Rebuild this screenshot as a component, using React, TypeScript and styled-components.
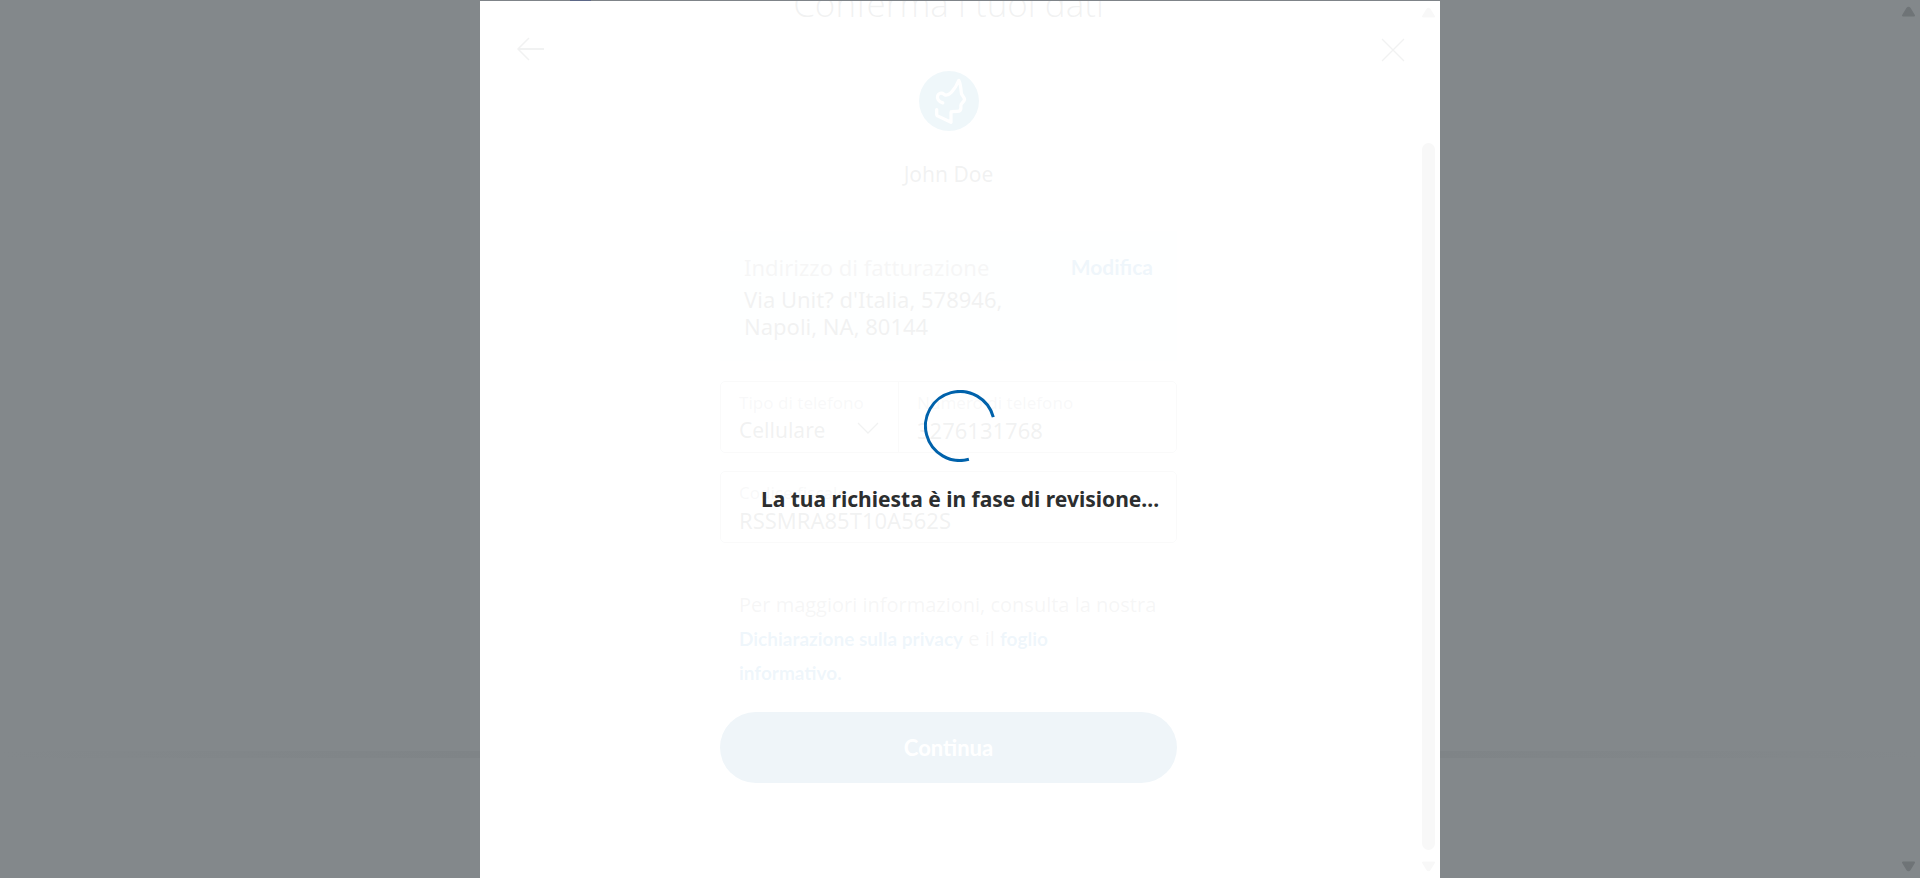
import React from 'react';
import styled, { createGlobalStyle } from 'styled-components';

const regular = '"Noto Sans", "Open Sans", sans-serif';
const strong = 'Lato, "Open Sans", sans-serif';

const GlobalStyle = createGlobalStyle`
  *, *::before, *::after { box-sizing: border-box; }
  body { margin: 0; background: #83888b; color: #2c2e2f; font-family: ${regular}; }
  h1, p { margin: 0; }
`;

const Backdrop = styled.div`
  display: grid;
  grid-template-columns: 1fr 2fr 1fr;
  grid-template-rows: 100%;
  height: 100vh;
  padding-top: 1px;
  overflow: hidden;
  background:
    linear-gradient(#5c6787, #5c6787) 30% top / 21px 1px no-repeat,
    linear-gradient(#7f8489, #7f8489) center top / 50% 1px no-repeat;
`;

const PageSide = styled.div<{ $side: 'left' | 'right' }>`
  display: flex;
  justify-content: flex-end;
  background: linear-gradient(to ${(p) => p.$side}, #7f8487, #83888b) left bottom 120px / 100% 7px no-repeat;
`;

const Modal = styled.main`
  position: relative;
  display: flex;
  min-width: 0;
  background: #ffffff;
`;

const Pane = styled.div`
  flex: 1;
  min-width: 0;
  overflow: hidden;
`;

const Scrollbar = styled.div`
  display: flex;
  flex-direction: column;
  align-items: center;
  width: 23px;
  padding: 6px 0;
`;

const PageScrollbar = styled(Scrollbar)`
  justify-content: space-between;
  padding-top: 5px;
`;

const ScrollArrow = styled.svg`
  flex: none;
  width: 15px;
  height: 11px;
`;

const ScrollGap = styled.div`
  flex: 125;
`;

const ScrollThumb = styled.div`
  flex: 707;
  width: 13px;
  margin-bottom: 11px;
  border-radius: 7px;
  background: #8b8b8b;
`;

const CornerButton = styled.button<{ $side: 'left' | 'right' }>`
  position: absolute;
  top: 32px;
  ${(p) => p.$side}: 31px;
  width: 36px;
  height: 34px;
  padding: 0;
  border: 0;
  background: none;
  color: #2c2e2f;
  svg { display: block; width: 36px; height: 34px; }
`;

const Form = styled.form`
  display: flex;
  flex-direction: column;
  width: 457px;
  max-width: 100%;
  margin: 0 auto;
`;

const Title = styled.h1`
  margin-top: -17px;
  font: 300 35px/40px "Open Sans", sans-serif;
  text-align: center;
  white-space: nowrap;
`;

const Avatar = styled.svg`
  width: 60px;
  height: 60px;
  margin: 47px auto 28px;
`;

const Name = styled.p`
  font-size: 21px;
  line-height: 30px;
  text-align: center;
`;

const AddressCard = styled.section`
  margin-top: 42px;
  padding: 21px 24px;
  background: #eaf4f2;
`;

const CardHead = styled.div`
  display: flex;
  justify-content: space-between;
  margin-bottom: 4px;
  font-size: 22px;
  line-height: 30px;
  color: #6c7378;
`;

const Address = styled.address`
  font-size: 22px;
  line-height: 27px;
  font-style: normal;
`;

const StrongLink = styled.a<{ $size: number }>`
  font: 700 ${(p) => p.$size}px/30px ${strong};
  color: #0070ba;
  text-decoration: none;
`;

const FieldRow = styled.div`
  display: flex;
  margin-top: 20px;
  border: 1px solid #a6acaf;
  border-radius: 5px;
  & + & { margin-top: 18px; }
`;

const Field = styled.div<{ $width?: string }>`
  position: relative;
  flex: ${(p) => (p.$width ? 'none' : '1')};
  width: ${(p) => p.$width ?? 'auto'};
  min-width: 0;
  padding: 9px 18px 7px;
  & + & { border-left: 1px solid #a6acaf; }
`;

const Label = styled.label`
  display: block;
  font-size: 17px;
  line-height: 24px;
  color: #8f9498;
`;

const Input = styled.input`
  display: block;
  width: 100%;
  height: 30px;
  padding: 0;
  border: 0;
  background: none;
  color: #2c2e2f;
  font: 22px/30px ${regular};
`;

const Select = styled.select`
  display: block;
  width: 100%;
  height: 30px;
  padding: 0;
  border: 0;
  appearance: none;
  background: none;
  color: #2c2e2f;
  font: 21px/30px ${regular};
`;

const Chevron = styled.svg`
  position: absolute;
  right: 19px;
  bottom: 18px;
  width: 22px;
  height: 12px;
  pointer-events: none;
`;

const Legal = styled.p`
  margin: 45px 0 22px;
  padding-left: 19px;
  font: 20px/34px "Open Sans", sans-serif;
  color: #6c7378;
`;

const Submit = styled.button`
  height: 71px;
  border: 0;
  border-radius: 36px;
  background: #00609c;
  color: #ffffff;
  font: 700 22px/30px ${strong};
`;

const LoadingOverlay = styled.div`
  position: absolute;
  inset: 0;
  display: flex;
  flex-direction: column;
  align-items: center;
  padding-top: 389px;
  background: rgba(255, 255, 255, 0.938);
`;

const Spinner = styled.svg`
  width: 72px;
  height: 72px;
  margin-bottom: 23px;
`;

const Message = styled.p`
  font: 700 21px/28px ${regular};
  text-align: center;
`;

function Triangle({ down, color }: { down?: boolean; color: string }) {
  return (
    <ScrollArrow viewBox="0 0 15 11" aria-hidden="true">
      <path
        d={down ? 'M2 1.5h11L8.6 8.6Q7.5 10 6.4 8.6Z' : 'M2 9.5h11L8.6 2.4Q7.5 1 6.4 2.4Z'}
        fill={color}
        stroke={color}
        strokeWidth="2"
        strokeLinejoin="round"
      />
    </ScrollArrow>
  );
}

export default function App() {
  return (
    <>
      <GlobalStyle />
      <Backdrop>
        <PageSide $side="left" />
        <Modal>
          <Pane>
            <Form onSubmit={(e) => e.preventDefault()}>
              <Title>Conferma i tuoi dati</Title>
              <Avatar viewBox="0 0 60 60" fill="none" aria-hidden="true">
                <circle cx="30" cy="30" r="30" fill="#0d80a8" />
                <path
                  d="M17.7 38.5v5.3c0 .6.3.9.8 1.1L32 51.3V41.5c0-.5.3-.8.8-.8l5.4-.3c2.6-.1 3.7-1 3.7-3.5v-2.7c0-.8.3-1.3.9-1.9l1.8-1.9c1.2-1.3 1.2-2.5.2-3.9L43 23.7c-.5-.7-.6-1.3-.7-2.2-.4-4.3-.8-9-2.5-12.2-1.7 4.5-4.5 9-7.5 12-1.5 1.5-3.300 2.900-5.300 2.900-1 0-1.700-.6-2.400-1.200-2.100-1.700-5-.6-5.900 1.700-1 2.700.8 6 5.100 7.200"
                  stroke="#ffffff"
                  strokeWidth="3.2"
                  strokeLinecap="round"
                  strokeLinejoin="round"
                />
              </Avatar>
              <Name>John Doe</Name>
              <AddressCard>
                <CardHead>
                  <span>Indirizzo di fatturazione</span>
                  <StrongLink href="#modifica" $size={21}>Modifica</StrongLink>
                </CardHead>
                <Address>
                  Via Unit? d'Italia, 578946,
                  <br />
                  Napoli, NA, 80144
                </Address>
              </AddressCard>
              <FieldRow>
                <Field $width="177px">
                  <Label htmlFor="phone-type">Tipo di telefono</Label>
                  <Select id="phone-type" defaultValue="Cellulare">
                    <option>Cellulare</option>
                  </Select>
                  <Chevron viewBox="0 0 22 12" fill="none" aria-hidden="true">
                    <path d="M1 1l10 10L21 1" stroke="#2c2e2f" strokeWidth="1.25" />
                  </Chevron>
                </Field>
                <Field>
                  <Label htmlFor="phone">Numero di telefono</Label>
                  <Input id="phone" type="tel" defaultValue="3276131768" />
                </Field>
              </FieldRow>
              <FieldRow>
                <Field>
                  <Label htmlFor="tax-code">Codice fiscale</Label>
                  <Input id="tax-code" type="text" defaultValue="RSSMRA85T10A562S" />
                </Field>
              </FieldRow>
              <Legal>
                Per maggiori informazioni, consulta la nostra{' '}
                <StrongLink href="#privacy" $size={19}>Dichiarazione sulla privacy</StrongLink> e il{' '}
                <StrongLink href="#foglio" $size={19}>
                  foglio
                  <br />
                  informativo.
                </StrongLink>
              </Legal>
              <Submit type="submit">Continua</Submit>
            </Form>
          </Pane>
          <Scrollbar>
            <Triangle color="#8b8b8b" />
            <ScrollGap />
            <ScrollThumb />
            <Triangle down color="#8b8b8b" />
          </Scrollbar>
          <CornerButton $side="left" type="button" aria-label="Indietro">
            <svg viewBox="0 0 36 34" fill="none" stroke="currentColor">
              <path d="M7 16h26" strokeWidth="2" />
              <path d="M18 5L7 16l11 11" strokeWidth="1.5" />
            </svg>
          </CornerButton>
          <CornerButton $side="right" type="button" aria-label="Chiudi">
            <svg viewBox="0 0 36 34" fill="none" stroke="currentColor">
              <path d="M9 6l22 22M31 6L9 28" strokeWidth="1.25" />
            </svg>
          </CornerButton>
          <LoadingOverlay role="status">
            <Spinner viewBox="0 0 72 72" fill="none" aria-hidden="true">
              <path d="M69.3 27.1A34.5 34.5 0 1 0 44.9 69.3" stroke="#0062ab" strokeWidth="3" />
            </Spinner>
            <Message>La tua richiesta è in fase di revisione...</Message>
          </LoadingOverlay>
        </Modal>
        <PageSide $side="right">
          <PageScrollbar>
            <Triangle color="#6f7477" />
            <Triangle down color="#6f7477" />
          </PageScrollbar>
        </PageSide>
      </Backdrop>
    </>
  );
}
